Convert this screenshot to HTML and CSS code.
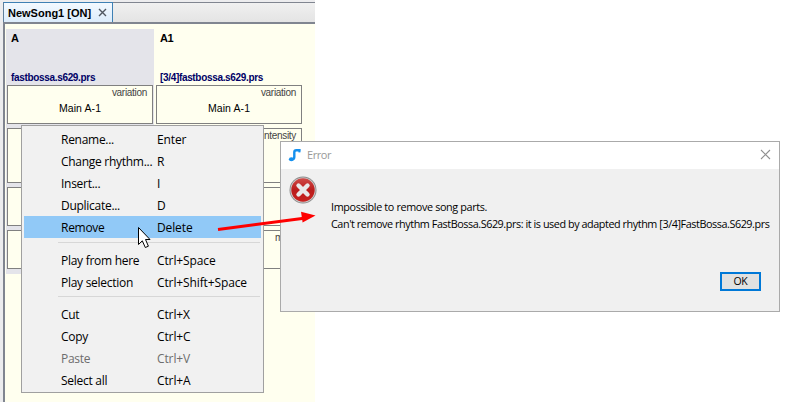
FILE: index.html
```html
<!DOCTYPE html>
<html lang="en">
<head>
<meta charset="utf-8">
<title>NewSong1</title>
<link rel="stylesheet" href="styles.css">
</head>
<body>
<main class="desktop">
  <section class="editor">
    <header class="tabs">
      <div class="tab"><span class="tab-name">NewSong1 [ON]</span>
        <svg class="tab-close" width="9" height="9" viewBox="0 0 9 9"><path d="M1 1l7 7M8 1l-7 7" stroke="#505760" stroke-width="1.4"/></svg>
      </div>
    </header>
    <div class="parts">
      <div class="part selected">
        <div class="part-head"><b class="part-name">A</b><b class="rhythm">fastbossa.s629.prs</b></div>
        <div class="param"><span class="label">variation</span><span class="value">Main A-1</span></div>
        <div class="param tall"></div>
        <div class="param"></div>
        <div class="param"></div>
      </div>
      <div class="part">
        <div class="part-head"><b class="part-name">A1</b><b class="rhythm">[3/4]fastbossa.s629.prs</b></div>
        <div class="param"><span class="label">variation</span><span class="value">Main A-1</span></div>
        <div class="param tall"><span class="label">intensity</span></div>
        <div class="param"></div>
        <div class="param"><span class="label">mute</span></div>
      </div>
    </div>
  </section>

  <div class="menu">
    <div class="item"><span>Rename...</span><span class="key">Enter</span></div>
    <div class="item"><span>Change rhythm...</span><span class="key">R</span></div>
    <div class="item"><span>Insert...</span><span class="key">I</span></div>
    <div class="item"><span>Duplicate...</span><span class="key">D</span></div>
    <div class="item active"><span>Remove</span><span class="key">Delete</span></div>
    <hr class="sep">
    <div class="item"><span>Play from here</span><span class="key">Ctrl+Space</span></div>
    <div class="item"><span>Play selection</span><span class="key">Ctrl+Shift+Space</span></div>
    <hr class="sep second">
    <div class="item"><span>Cut</span><span class="key">Ctrl+X</span></div>
    <div class="item"><span>Copy</span><span class="key">Ctrl+C</span></div>
    <div class="item disabled"><span>Paste</span><span class="key">Ctrl+V</span></div>
    <div class="item"><span>Select all</span><span class="key">Ctrl+A</span></div>
  </div>

  <div class="dialog">
    <header class="title">
      <svg width="14" height="14" viewBox="0 0 14 14"><path d="M2 11.4H3.8Q6.3 11.4 6.3 9V4.2Q6.3 2.2 8.3 2.2H12.4" fill="none" stroke="#1590ee" stroke-width="2.4"/><path d="M11.4 1v3.4" stroke="#1590ee" stroke-width="2"/><ellipse cx="3.4" cy="11.2" rx="2.5" ry="2" fill="#1590ee"/></svg>
      <span class="title-text">Error</span>
      <svg class="close" width="11" height="11" viewBox="0 0 11 11"><path d="M1 1l9 9M10 1l-9 9" stroke="#909090" stroke-width="1.1"/></svg>
    </header>
    <div class="message">
      <svg class="error-icon" width="28" height="28" viewBox="0 0 28 28">
        <defs><linearGradient id="red" x2="0" y2="1"><stop offset="0" stop-color="#cf4a47"/><stop offset=".5" stop-color="#ba1c1c"/><stop offset="1" stop-color="#c92220"/></linearGradient></defs>
        <circle cx="14" cy="14" r="13.5" fill="#8b8b8b"/><circle cx="14" cy="14" r="12.6" fill="#d0cccc"/><circle cx="14" cy="14" r="11.7" fill="url(#red)"/>
        <path d="M9.5 9.5l9 9M18.5 9.5l-9 9" stroke="#e9e9e9" stroke-width="4.4" stroke-linecap="round"/>
      </svg>
      <div class="copy"><span class="line first">Impossible to remove song parts.</span><span class="line">Can't remove rhythm FastBossa.S629.prs: it is used by adapted rhythm [3/4]FastBossa.S629.prs</span></div>
    </div>
    <button class="ok">OK</button>
  </div>

  <svg class="overlay" width="800" height="402" viewBox="0 0 800 402">
    <path d="M218 229.5L304 218.3" stroke="#fe0000" stroke-width="3"/>
    <path d="M315.5 215.5L301 211.8L302.6 222.6Z" fill="#fe0000"/>
    <path d="M138.5 227.5V244.5L142.3 240.8L145.3 247.5L148.4 246.2L145.5 239.5H150Z" fill="#fff" stroke="#000"/>
  </svg>
</main>
</body>
</html>
```
FILE: styles.css
```css
* { box-sizing: border-box; }
body { margin: 0; background: #fff; font-family: "Open Sans", "Noto Sans", sans-serif; color: #000; }
.desktop { position: relative; width: 800px; height: 402px; overflow: hidden; }
.editor { width: 315px; height: 402px; padding: 2px 0 0 3px; background: #ececee; display: flex; flex-direction: column; }
.tabs { height: 20px; border-top: 1px solid #808590; background: linear-gradient(#f0f0f0, #e4e4e4); flex: none; }
.tab { width: 110px; height: 20px; margin-top: -1px; padding-left: 4px; display: flex; align-items: center; border: 1px solid #3e80b4; border-bottom: 0; border-left-color: #5f7f9c; background: linear-gradient(#f3f9ff, #dcecfb); font: bold 11px "Liberation Sans", sans-serif; white-space: nowrap; }
.tab-name { width: 85px; letter-spacing: 0; }
.tab-close { flex: none; margin-left: 5px; }
.parts { flex: 1; border-top: 2px solid #808590; border-left: 2px solid #808590; background: #ffffef; display: flex; gap: 1px; padding: 5px 0 0 1px; }
.part { width: 148px; height: 245px; padding: 0 1px; display: flex; flex-direction: column; gap: 4px; }
.selected { background: #e4e4ea; }
.part-head { height: 52px; padding: 3px 3px 0 4px; display: flex; flex-direction: column; justify-content: space-between; font: bold 10px/12px "Liberation Sans", sans-serif; white-space: nowrap; }
.part-name { font-size: 11px; letter-spacing: -.5px; }
.rhythm { height: 9px; color: #000066; letter-spacing: -.33px; }
.param { position: relative; width: 146px; height: 39px; border: 1px solid #808080; background: #ffffef; text-align: center; }
.param.tall { height: 55px; }
.label { position: absolute; right: 5px; top: 1px; font: 10px/12px "Liberation Sans", sans-serif; color: #444; letter-spacing: -.3px; }
.value { display: block; margin-top: 15px; font: 10.5px/14px "Liberation Sans", sans-serif; letter-spacing: .1px; }
.menu { position: absolute; left: 21px; top: 125px; width: 243px; height: 268px; padding: 2px; border: 1px solid #a0a0a0; background: #f1f1f1; }
.item { height: 22px; display: grid; grid-template-columns: 96px 1fr; padding-left: 37px; font-size: 12px; line-height: 23px; letter-spacing: -.28px; white-space: nowrap; }
.key { letter-spacing: -.12px; }
.active { background: #91c9f7; }
.disabled { color: #6d6d6d; }
.sep { height: 1px; margin: 4px 1px 6px 34px; border: 0; background: #d7d7d7; }
.second { margin-top: 3px; }
.dialog { position: absolute; left: 280px; top: 141px; width: 500px; height: 171px; border: 1px solid #aaa; background: #f0f0f0; display: flex; flex-direction: column; }
.title { height: 27px; flex: none; padding: 0 8px 2px 7px; display: flex; align-items: center; background: #fff; font-size: 11px; letter-spacing: -.45px; color: #999; }
.title-text { margin-left: 5px; }
.close { margin-left: auto; }
.message { display: flex; padding: 7px 0 0 8px; height: 103px; flex: none; }
.error-icon { flex: none; }
.copy { padding: 22px 0 0 14px; display: flex; flex-direction: column; font-size: 10.8px; line-height: 17px; letter-spacing: -.43px; white-space: nowrap; }
.first { letter-spacing: -.36px; }
.ok { width: 41px; height: 19px; margin-left: 439px; padding: 0; border: 2px solid #0078d7; background: #e1e1e1; font: 10.5px/13px "Open Sans", sans-serif; letter-spacing: -.4px; color: #000; }
.overlay { position: absolute; left: 0; top: 0; pointer-events: none; }
```
